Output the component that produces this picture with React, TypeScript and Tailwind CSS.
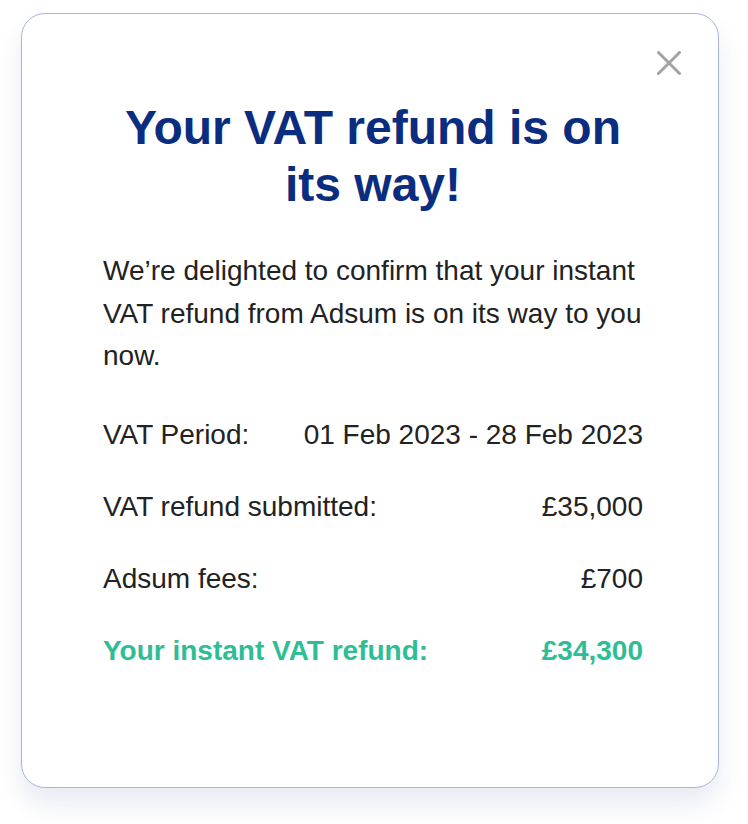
import React from 'react';

const rows = [
  { label: 'VAT Period:', value: '01 Feb 2023 - 28 Feb 2023' },
  { label: 'VAT refund submitted:', value: '£35,000' },
  { label: 'Adsum fees:', value: '£700' },
];

export default function App() {
  return (
    <div className="min-h-screen w-[748px] bg-white pt-[13px] pl-[21px] font-['Liberation_Sans',Arial,sans-serif]">
      <div className="relative w-[698px] h-[775px] rounded-[24px] border border-[#aab6d9] bg-white shadow-[0_16px_24px_rgba(70,90,160,0.12)]">
        <button className="absolute right-[37px] top-[37px] w-[24px] h-[24px] flex items-center justify-center" title="Close">
          <svg width="24" height="24" viewBox="0 0 24 24" fill="none">
            <path d="M1.5 1.5 L22.5 22.5 M22.5 1.5 L1.5 22.5" stroke="#a3a3a3" strokeWidth="3" strokeLinecap="round" />
          </svg>
        </button>

        <div className="pt-[85px] pl-[81px] pr-[75px]">
          <h1 className="text-center text-[48px] leading-[57px] font-bold text-[#0b2d7f]">
            Your VAT refund is on its way!
          </h1>

          <p className="mt-[37px] text-[28px] leading-[42.5px] text-[#222]">
            We’re delighted to confirm that your instant VAT refund from Adsum is on its way to you now.
          </p>

          <div className="mt-[41px] flex flex-col gap-[40px] text-[28px] leading-[32px] text-[#222]">
            {rows.map((r) => (
              <div key={r.label} className="flex justify-between">
                <span>{r.label}</span>
                <span>{r.value}</span>
              </div>
            ))}
            <div className="flex justify-between font-bold text-[#2fbd95]">
              <span>Your instant VAT refund:</span>
              <span>£34,300</span>
            </div>
          </div>
        </div>
      </div>
    </div>
  );
}
